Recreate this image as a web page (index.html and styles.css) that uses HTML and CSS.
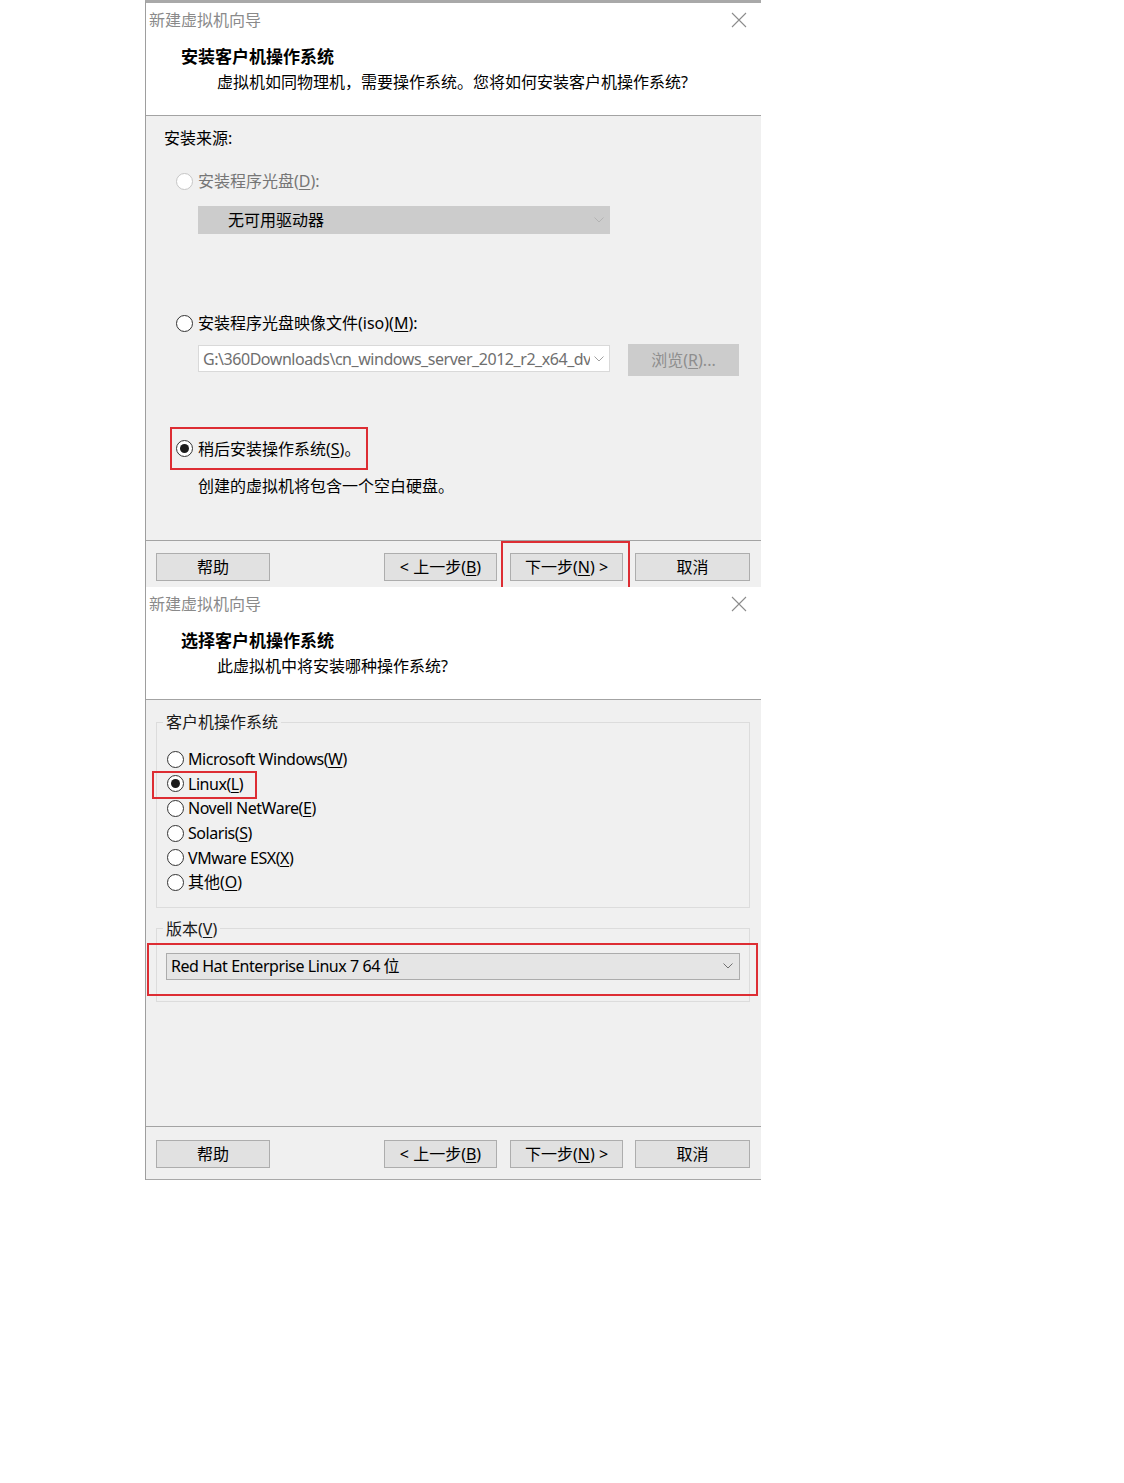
FILE: index.html
```html
<!DOCTYPE html>
<html lang="zh-CN">
<head>
<meta charset="utf-8">
<title>新建虚拟机向导</title>
<link rel="stylesheet" href="styles.css">
</head>
<body>
<div class="page">
  <section class="dlg dlg-first">
    <div class="titlebar">
      <span class="title">新建虚拟机向导</span>
      <svg class="close" viewBox="0 0 16 16"><path d="M1 1 L15 15 M15 1 L1 15" /></svg>
    </div>
    <div class="header">
      <div class="heading">安装客户机操作系统</div>
      <div class="sub">虚拟机如同物理机，需要操作系统。您将如何安装客户机操作系统?</div>
    </div>
    <div class="body body-1">
      <div class="src-label">安装来源:</div>
      <div class="radio-row r-disc dimmed"><span class="radio radio-dim"></span><span>安装程序光盘(<u>D</u>):</span></div>
      <div class="combo combo-disabled">
        <span class="combo-text combo-text-wide">无可用驱动器</span>
        <svg class="chev chev-light" viewBox="0 0 10 6"><polyline points="0.5,0.5 5,5 9.5,0.5" /></svg>
      </div>
      <div class="radio-row r-iso"><span class="radio"></span><span>安装程序光盘映像文件(iso)(<u>M</u>):</span></div>
      <div class="iso-row">
        <div class="combo combo-iso">
          <span class="combo-text combo-text-gray lat">G:\360Downloads\cn_windows_server_2012_r2_x64_dvd_2707961.iso</span>
          <svg class="chev chev-mid" viewBox="0 0 10 6"><polyline points="0.5,0.5 5,5 9.5,0.5" /></svg>
        </div>
        <button class="btn btn-browse">浏览(<u>R</u>)...</button>
      </div>
      <div class="radio-row later"><span class="radio radio-checked"></span><span>稍后安装操作系统(<u>S</u>)。</span></div>
      <div class="desc">创建的虚拟机将包含一个空白硬盘。</div>
    </div>
    <div class="footer footer-1">
      <button class="btn btn-help">帮助</button>
      <button class="btn btn-back">&lt; 上一步(<u>B</u>)</button>
      <div class="mark-next"><button class="btn btn-next">下一步(<u>N</u>) &gt;</button></div>
      <button class="btn btn-cancel btn-cancel-1">取消</button>
    </div>
  </section>

  <section class="dlg dlg-second">
    <div class="titlebar">
      <span class="title">新建虚拟机向导</span>
      <svg class="close" viewBox="0 0 16 16"><path d="M1 1 L15 15 M15 1 L1 15" /></svg>
    </div>
    <div class="header">
      <div class="heading">选择客户机操作系统</div>
      <div class="sub">此虚拟机中将安装哪种操作系统?</div>
    </div>
    <div class="body body-2">
      <fieldset class="group group-os">
        <legend class="legend">客户机操作系统</legend>
        <div class="group-inner os-list">
          <div class="os-row"><span class="radio"></span><span class="lat">Microsoft Windows(<u>W</u>)</span></div>
          <div class="os-row os-marked"><span class="radio radio-checked"></span><span class="lat">Linux(<u>L</u>)</span></div>
          <div class="os-row"><span class="radio"></span><span class="lat">Novell NetWare(<u>E</u>)</span></div>
          <div class="os-row"><span class="radio"></span><span class="lat">Solaris(<u>S</u>)</span></div>
          <div class="os-row"><span class="radio"></span><span class="lat">VMware ESX(<u>X</u>)</span></div>
          <div class="os-row"><span class="radio"></span><span>其他(<u>O</u>)</span></div>
        </div>
      </fieldset>
      <fieldset class="group group-ver">
        <legend class="legend">版本(<u>V</u>)</legend>
        <div class="group-inner ver-inner">
          <div class="ver-wrap">
            <div class="combo combo-ver">
              <span class="combo-text lat">Red Hat Enterprise Linux 7 64 位</span>
              <svg class="chev chev-dark" viewBox="0 0 10 6"><polyline points="0.5,0.5 5,5 9.5,0.5" /></svg>
            </div>
          </div>
        </div>
      </fieldset>
    </div>
    <div class="footer footer-2">
      <button class="btn btn-help">帮助</button>
      <button class="btn btn-back">&lt; 上一步(<u>B</u>)</button>
      <button class="btn btn-next btn-next-2">下一步(<u>N</u>) &gt;</button>
      <button class="btn btn-cancel btn-cancel-2">取消</button>
    </div>
  </section>
</div>
</body>
</html>
```

FILE: styles.css
```css
*, *::before, *::after { box-sizing: border-box; }

html, body {
  margin: 0;
  padding: 0;
  background: #ffffff;
}

body {
  font-family: "Noto Sans", "Noto Sans CJK SC", sans-serif;
  font-size: 16px;
  color: #000;
}

u { text-decoration: underline; text-underline-offset: 2px; }

.lat { letter-spacing: -0.45px; }

.page {
  width: 616px;
  margin-left: 145px;
}

.dlg {
  border-left: 1px solid #9e9e9e;
  background: #f0f0f0;
}

.dlg-first { border-top: 3px solid #a9a9a9; }

.titlebar {
  height: 34px;
  background: #fff;
  display: flex;
  align-items: center;
  justify-content: space-between;
  padding: 0 14px 0 3px;
}

.title {
  color: #8a8a8a;
  line-height: 34px;
}

.close {
  width: 16px;
  height: 16px;
  fill: none;
  stroke: #8c8c8c;
  stroke-width: 1.1;
}

.header {
  height: 79px;
  background: #fff;
  border-bottom: 1px solid #a3a3a3;
  padding-top: 9px;
}

.heading {
  font-weight: bold;
  font-size: 17px;
  line-height: 22px;
  padding-left: 35px;
}

.sub {
  line-height: 22px;
  margin-top: 3px;
  padding-left: 71px;
}

.body-1 {
  height: 424px;
  padding-top: 11px;
}

.src-label {
  line-height: 22px;
  padding-left: 18px;
}

.radio-row {
  display: flex;
  align-items: center;
  gap: 5px;
  height: 24px;
  margin-left: 30px;
  line-height: 22px;
}

.dimmed { color: #767676; }

.r-disc { margin-top: 20px; }
.r-iso { margin-top: 77px; }

.radio {
  flex: none;
  position: relative;
  width: 17px;
  height: 17px;
  border-radius: 50%;
  border: 1px solid #333;
  background: #fff;
}

.radio-dim { border-color: #c6c6c6; }

.radio-checked::after {
  content: "";
  position: absolute;
  inset: 3px;
  border-radius: 50%;
  background: #1b1b1b;
}

.combo {
  display: flex;
  align-items: center;
  height: 28px;
  overflow: hidden;
}

.combo-text {
  flex: 1;
  min-width: 0;
  white-space: nowrap;
  overflow: hidden;
  line-height: 22px;
}

.combo-disabled {
  margin: 13px 0 0 52px;
  width: 412px;
  background: #cccccc;
  padding: 0 6px 0 30px;
}

.iso-row {
  display: flex;
  align-items: flex-start;
  margin: 9px 0 0 52px;
}

.combo-iso {
  margin-top: 1px;
  width: 412px;
  height: 27px;
  background: #fff;
  border: 1px solid #d9d9d9;
  padding: 0 5px 0 4px;
}

.combo-text-gray { color: #6f6f6f; }

.chev {
  flex: none;
  width: 10px;
  height: 6px;
  margin-left: 4px;
  fill: none;
  stroke-width: 1;
}

.chev-light { stroke: #b4b4b4; }
.chev-mid { stroke: #a0a0a0; }
.chev-dark { stroke: #707070; }

.btn {
  font: inherit;
  flex: none;
  height: 28px;
  margin: 12px 0 0;
  padding: 0;
  background: #e1e1e1;
  border: 1px solid #adadad;
  color: #000;
  line-height: 24px;
  text-align: center;
}

.btn-browse {
  margin: 0 0 0 18px;
  width: 111px;
  height: 32px;
  background: #cccccc;
  border-color: #cccccc;
  color: #8e8e8e;
}

.later {
  width: max-content;
  height: 43px;
  margin: 51px 0 0 24px;
  padding: 0 6px 0 4px;
  border: 2px solid #dd2d33;
}

.desc {
  margin-top: 5px;
  line-height: 22px;
  padding-left: 52px;
}

.footer {
  display: flex;
  align-items: flex-start;
  padding: 0 11px 0 10px;
  border-top: 1px solid #a3a3a3;
}

.footer-1 { height: 47px; }

.footer-2 {
  height: 54px;
  border-bottom: 1px solid #a8a8a8;
}

.footer-2 .btn { margin-top: 13px; }

.btn-help { width: 114px; }
.btn-back { width: 113px; margin-left: auto; }
.btn-next { width: 113px; }
.btn-cancel { width: 115px; }

.mark-next {
  align-self: stretch;
  margin-left: 4px;
  padding: 10px 5px 0 7px;
  border: 2px solid #dd2d33;
  border-bottom: 0;
}

.mark-next .btn { margin-top: 0; }

.btn-cancel-1 { margin-left: 5px; }
.btn-next-2 { margin-left: 13px; }
.btn-cancel-2 { margin-left: 12px; }

.body-2 {
  height: 426px;
  padding-top: 13px;
}

.group {
  margin: 0 11px 0 10px;
  padding: 0;
  min-width: 0;
  border: 1px solid #dcdcdc;
}

.group-ver { margin-top: 12px; }

.legend {
  margin-left: 6px;
  padding: 0 3px;
  line-height: 18px;
  color: #1a1a1a;
}

.os-list {
  padding: 16px 0 12px 10px;
}

.os-row {
  position: relative;
  display: flex;
  align-items: center;
  gap: 4px;
  height: 24.6px;
  line-height: 22px;
}

.os-marked::after {
  content: "";
  position: absolute;
  left: -15px;
  top: -1px;
  width: 105px;
  height: 28px;
  border: 2px solid #dd2d33;
}

.ver-inner {
  padding: 15px 0 21px 9px;
}

.ver-wrap {
  position: relative;
  width: 574px;
}

.ver-wrap::after {
  content: "";
  position: absolute;
  left: -19px;
  top: -10px;
  width: 611px;
  height: 53px;
  border: 2px solid #dd2d33;
}

.combo-ver {
  height: 27px;
  background: #e5e5e5;
  border: 1px solid #acacac;
  padding: 0 6px 0 4px;
}
```
